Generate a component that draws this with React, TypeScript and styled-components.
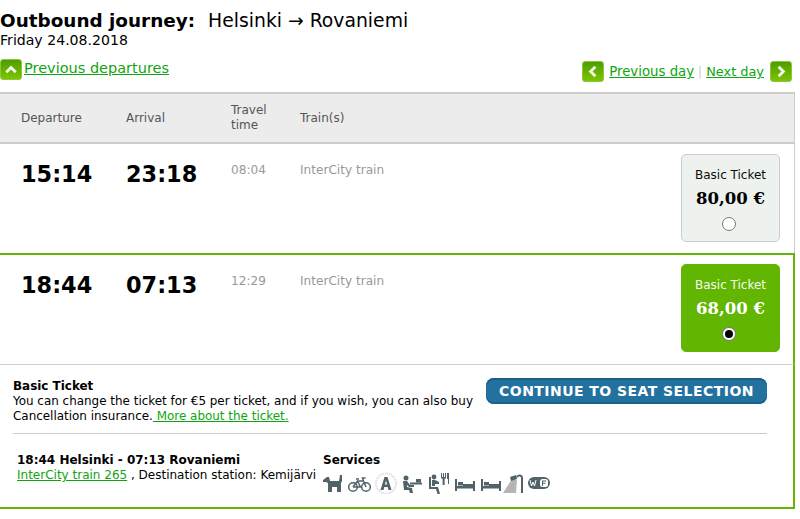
import React from 'react';
import styled, { createGlobalStyle } from 'styled-components';

const GlobalStyle = createGlobalStyle`
  html, body {
    margin: 0;
    padding: 0;
    background: #fff;
    font-family: "DejaVu Sans", Verdana, sans-serif;
    color: #000;
  }
`;

const Page = styled.div`
  width: 800px;
  height: 519px;
  overflow: hidden;
`;

const Header = styled.div`
  height: 92px;
  display: flex;
  flex-direction: column;
`;

const TitleRow = styled.div`
  display: flex;
  align-items: baseline;
  gap: 13px;
  padding-top: 9px;
  height: 24px;
  line-height: 24px;
`;

const TitleLabel = styled.span`
  font-size: 18.4px;
  font-weight: 700;
`;

const Route = styled.span`
  font-size: 18.8px;
`;

const DateLine = styled.div`
  font-size: 14.1px;
  line-height: 15px;
`;

const NavRow = styled.div`
  display: flex;
  justify-content: space-between;
  padding: 11px 0 0 0;
  width: 792px;
`;

const NavGroup = styled.div<{ $top?: number }>`
  display: flex;
  align-items: center;
  height: 21px;
  margin-top: ${({ $top }) => $top ?? 0}px;
`;

const ArrowButton = styled.span`
  width: 22px;
  height: 21px;
  box-sizing: border-box;
  border-radius: 3px;
  border: 1px solid #8cc63f;
  background: linear-gradient(#4f9e00, #7cc400);
  display: inline-flex;
  align-items: center;
  justify-content: center;
`;

const NavLink = styled.a<{ $size?: number; $left?: number; $right?: number; $up?: number }>`
  color: #0fa50f;
  text-decoration: underline;
  font-size: ${({ $size }) => $size ?? 13.3}px;
  margin-left: ${({ $left }) => $left ?? 0}px;
  margin-right: ${({ $right }) => $right ?? 0}px;
  margin-top: ${({ $up }) => -($up ?? 0)}px;
`;

const Divider = styled.span`
  color: #ccc;
  font-size: 12px;
  margin: 0 4px;
`;

const Table = styled.div`
  width: 795px;
  box-sizing: border-box;
  border-right: 1px solid #ccc;
`;

const HeadRow = styled.div`
  height: 52px;
  box-sizing: border-box;
  display: grid;
  grid-template-columns: 105px 105px 69px 1fr;
  padding-left: 21px;
  align-items: center;
  background: #ececec;
  border-top: 2px solid #ccc;
  border-bottom: 2px solid #ccc;
  font-size: 12px;
  line-height: 15px;
  color: #555;
`;

const Row = styled.div<{ $selected?: boolean }>`
  height: ${({ $selected }) => ($selected ? 112 : 109)}px;
  box-sizing: border-box;
  display: grid;
  grid-template-columns: 105px 105px 69px 1fr auto;
  padding: ${({ $selected }) => ($selected ? '10px 13px 0 21px' : '10px 14px 0 21px')};
  ${({ $selected }) =>
    $selected
      ? `border-top: 2px solid #62b500;
         border-right: 2px solid #62b500;
         border-bottom: 1px solid #ccc;
         margin-right: -1px;`
      : ''}
`;

const Time = styled.div`
  font-size: 22.4px;
  font-weight: 700;
  line-height: 24px;
  padding-top: 8px;
`;

const Muted = styled.div`
  font-size: 12.1px;
  line-height: 16px;
  color: #999;
  padding-top: 8px;
`;

const TicketCard = styled.div<{ $selected?: boolean }>`
  width: 99px;
  height: 88px;
  box-sizing: border-box;
  border-radius: 5px;
  border: 1px solid ${({ $selected }) => ($selected ? '#62b500' : '#ccc')};
  background: ${({ $selected }) => ($selected ? '#62b500' : '#eef2ee')};
  color: ${({ $selected }) => ($selected ? '#fff' : '#000')};
  margin-top: ${({ $selected }) => ($selected ? -1 : 0)}px;
  display: flex;
  flex-direction: column;
  align-items: center;
  padding-top: 12px;
`;

const TicketName = styled.div`
  font-size: 12px;
  line-height: 16px;
  color: inherit;
  opacity: 0.95;
`;

const Price = styled.div`
  font-family: "DejaVu Serif", serif;
  font-size: 16.5px;
  font-weight: 700;
  line-height: 20px;
  margin-top: 6px;
`;

const Radio = styled.span<{ $checked?: boolean }>`
  width: 14px;
  height: 14px;
  box-sizing: border-box;
  margin: 8px 3px 0 0;
  border-radius: 50%;
  border: 1px solid #777;
  background: #fff;
  display: flex;
  align-items: center;
  justify-content: center;

  &::after {
    content: '';
    width: 8px;
    height: 8px;
    border-radius: 50%;
    background: ${({ $checked }) => ($checked ? '#000' : 'transparent')};
  }
`;

const Details = styled.div`
  height: 144px;
  width: 795px;
  box-sizing: border-box;
  border-right: 2px solid #62b500;
  border-bottom: 2px solid #62b500;
  padding: 14px 26px 0 13px;
`;

const InfoRow = styled.div`
  display: flex;
  justify-content: space-between;
  height: 54px;
  border-bottom: 1px solid #ccc;
`;

const InfoText = styled.div`
  width: 468px;
  font-size: 11.95px;
  line-height: 15px;
  white-space: nowrap;
`;

const Strong = styled.div`
  font-weight: 700;
`;

const ContinueButton = styled.button`
  width: 281px;
  height: 26px;
  margin-top: -1px;
  border: none;
  border-radius: 8px;
  background: #23719f;
  box-shadow: inset 0 -2px 0 #1b5f88, inset 0 2px 0 #1b5f88;
  color: #fff;
  font-family: "DejaVu Sans", sans-serif;
  font-weight: 700;
  font-size: 14px;
  letter-spacing: 0.45px;
  padding: 0;
`;

const TripRow = styled.div`
  display: flex;
  padding: 19px 0 0 4px;
  font-size: 12px;
  line-height: 15px;
`;

const TripInfo = styled.div`
  width: 306px;
  white-space: nowrap;
`;

const TripLink = styled.a`
  color: #0fa50f;
  text-decoration: underline;
`;

const Services = styled.div`
  display: flex;
  flex-direction: column;
`;

const ServiceIcons = styled.div`
  display: flex;
  margin-top: 4px;
  color: #4f6368;
`;

const IconSvg = styled.svg<{ $gap: number }>`
  margin-left: ${({ $gap }) => $gap}px;
  flex: none;
`;

const Chevron = ({ dir }: { dir: 'up' | 'left' | 'right' }) => {
  const points = {
    up: '5,13 10,8 15,13',
    left: '12.500,5 7.500,10 12.500,15',
    right: '7.500,5 12.500,10 7.500,15',
  }[dir];
  return (
    <svg width="20" height="19" viewBox="0 0 20 20">
      <polyline points={points} fill="none" stroke="#f2f7ea" strokeWidth="3" />
    </svg>
  );
};

const Icon = ({ w, gap = 5, children }: { w: number; gap?: number; children: React.ReactNode }) => (
  <IconSvg $gap={gap} width={w} height="22" viewBox={`0 0 ${w} 22`} fill="currentColor">
    {children}
  </IconSvg>
);

const Bed = ({ gap }: { gap: number }) => (
  <Icon w={20} gap={gap}>
    <rect x="0" y="7" width="2" height="12" />
    <rect x="18" y="9" width="2" height="10" />
    <rect x="2" y="14" width="16" height="2.500" />
    <rect x="3" y="10" width="5" height="3.500" />
    <rect x="8" y="12" width="10" height="2" />
  </Icon>
);

const ServiceList = () => (
  <ServiceIcons>
    <Icon w={20} gap={0}>
      <path d="M0 8l4-3 2 0 1 4h9l1-6 2 0v6l-1 2v9h-4v-5H9v5H5v-9L3 10H0z" />
    </Icon>
    <Icon w={23} gap={5}>
      <g fill="none" stroke="currentColor" strokeWidth="1.500">
        <circle cx="5" cy="15" r="4.300" />
        <circle cx="18" cy="15" r="4.300" />
        <path d="M5 15l4.500-6h6l2.500 6M9.500 9l3 6H5M8 7h3M15.500 9l-1-3h3" />
      </g>
    </Icon>
    <Icon w={22} gap={4}>
      <circle cx="11" cy="11.500" r="10" fill="none" stroke="#d4d4d4" strokeWidth="2" strokeDasharray="1 1" />
      <path d="M9.500 5h3l4 13h-3l-.8-3H9.300l-.8 3h-3zm.4 7.600h2.200L11 8.500z" />
    </Icon>
    <Icon w={20} gap={5}>
      <circle cx="4" cy="6" r="2.500" />
      <path d="M1 9h4l3 4h4v2H7L5 13v2l5 1 1 5H8l-1-3H2z" />
      <rect x="8" y="10.500" width="12" height="2" />
      <rect x="14" y="7" width="5" height="3.500" />
    </Icon>
    <Icon w={21} gap={6}>
      <circle cx="6" cy="5" r="2.400" />
      <path d="M1 5h2v10h7l2 7H9.500L8 17H1z" />
      <path d="M4 8h3l4 2v2H7v2H4z" />
      <path d="M13 1h1v4h1V1h1v4h1V1h1v5l-1.400 1v6h-2V7L13 6zM19 1h2v11h-1V7h-1z" />
    </Icon>
    <Bed gap={6} />
    <Bed gap={6} />
    <Icon w={20} gap={2}>
      <path d="M0 21L9 7l5 1-1 13z" fill="#b5b5b5" />
      <path d="M13 5c2-4 7-3 7 1v15h-2V6c0-2-3-2-4 0z" />
      <path d="M7 5l6-2 1 4-6 2z" />
    </Icon>
    <Icon w={22} gap={5}>
      <rect x="0" y="5" width="22" height="12" rx="6" />
      <rect x="12" y="7" width="8" height="8" rx="2.500" fill="#fff" />
      <path d="M14 8.500h4v1h-3v1.200h2.500v1H15V14h-1z" />
      <path d="M2 8l1.500 6 1.500-4 1.500 4L8 8" fill="none" stroke="#fff" strokeWidth="1" />
    </Icon>
  </ServiceIcons>
);

const App: React.FC = () => (
  <Page>
    <GlobalStyle />
    <Header>
      <TitleRow>
        <TitleLabel>Outbound journey:</TitleLabel>
        <Route>Helsinki → Rovaniemi</Route>
      </TitleRow>
      <DateLine>Friday 24.08.2018</DateLine>
      <NavRow>
        <NavGroup>
          <ArrowButton>
            <Chevron dir="up" />
          </ArrowButton>
          <NavLink $size={14.5} $left={2} $up={3}>Previous departures</NavLink>
        </NavGroup>
        <NavGroup $top={2}>
          <ArrowButton>
            <Chevron dir="left" />
          </ArrowButton>
          <NavLink $left={5}>Previous day</NavLink>
          <Divider>|</Divider>
          <NavLink $size={12.9} $right={6}>Next day</NavLink>
          <ArrowButton>
            <Chevron dir="right" />
          </ArrowButton>
        </NavGroup>
      </NavRow>
    </Header>
    <Table>
      <HeadRow>
        <div>Departure</div>
        <div>Arrival</div>
        <div>Travel<br />time</div>
        <div>Train(s)</div>
      </HeadRow>
      <Row>
        <Time>15:14</Time>
        <Time>23:18</Time>
        <Muted>08:04</Muted>
        <Muted>InterCity train</Muted>
        <TicketCard>
          <TicketName>Basic Ticket</TicketName>
          <Price>80,00 €</Price>
          <Radio />
        </TicketCard>
      </Row>
      <Row $selected>
        <Time>18:44</Time>
        <Time>07:13</Time>
        <Muted>12:29</Muted>
        <Muted>InterCity train</Muted>
        <TicketCard $selected>
          <TicketName>Basic Ticket</TicketName>
          <Price>68,00 €</Price>
          <Radio $checked />
        </TicketCard>
      </Row>
    </Table>
    <Details>
      <InfoRow>
        <InfoText>
          <Strong>Basic Ticket</Strong>
          <div>You can change the ticket for €5 per ticket, and if you wish, you can also buy</div>
          <div>
            Cancellation insurance.<TripLink> More about the ticket.</TripLink>
          </div>
        </InfoText>
        <ContinueButton>CONTINUE TO SEAT SELECTION</ContinueButton>
      </InfoRow>
      <TripRow>
        <TripInfo>
          <Strong>18:44 Helsinki - 07:13 Rovaniemi</Strong>
          <TripLink>InterCity train 265</TripLink> , Destination station: Kemijärvi
        </TripInfo>
        <Services>
          <Strong>Services</Strong>
          <ServiceList />
        </Services>
      </TripRow>
    </Details>
  </Page>
);

export default App;
